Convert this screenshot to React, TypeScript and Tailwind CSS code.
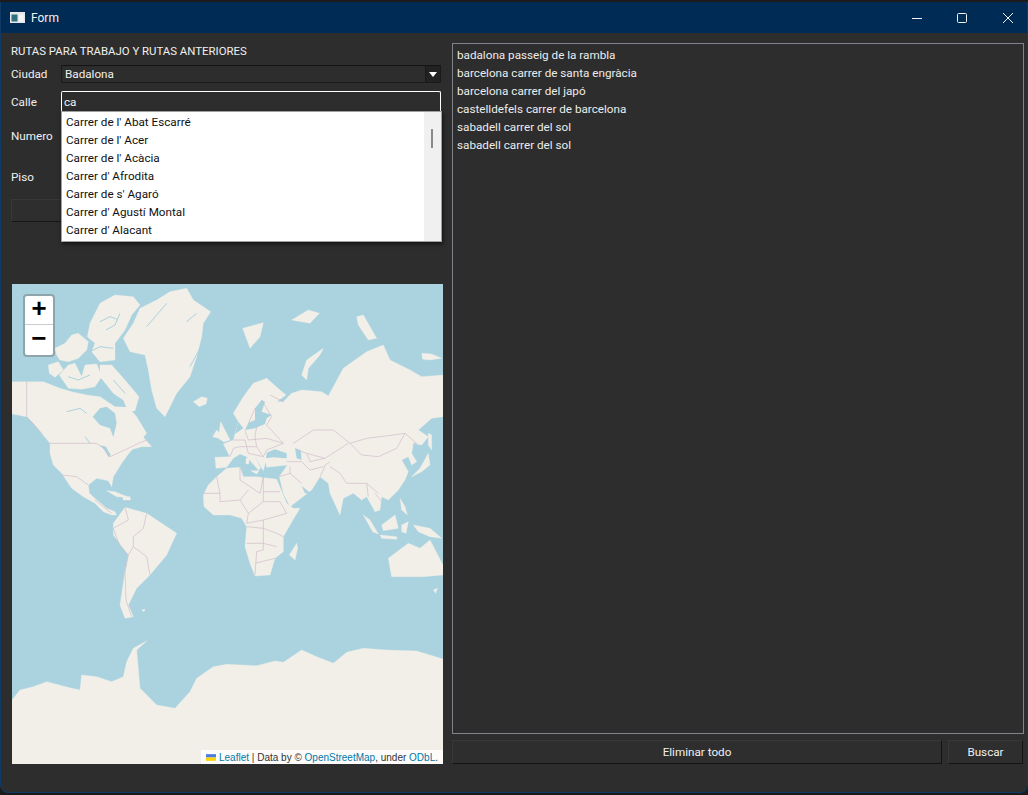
const LAND = [
  // north america
  "36,305 80,305 130,305 180,325 215,335 260,345 300,350 345,380 385,382 410,410 440,460 430,472 455,500 425,500 398,508 385,522 365,550 340,590 335,620 325,602 290,595 265,615 268,640 290,660 305,672 320,685 345,695 350,705 335,705 310,695 285,670 250,650 215,625 185,580 160,555 150,520 150,490 125,460 100,430 80,410 36,402",
  // greenland
  "370,175 400,130 420,85 470,60 510,35 560,25 580,60 632,95 610,130 605,170 590,230 570,290 530,340 510,380 495,410 470,385 455,330 445,270 435,225 390,215",
  // arctic islands
  "270,130 300,70 345,45 400,50 420,75 395,105 375,150 345,190 345,240 300,245 275,215 285,190 262,170",
  "300,255 335,255 375,300 417,350 405,392 385,395 370,360 340,340 300,290",
  "145,255 175,245 190,270 165,292 148,280",
  "178,285 205,255 225,250 245,290 255,255 290,252 305,290 285,320 245,328 205,325",
  "165,205 195,190 215,165 235,160 265,185 260,210 235,235 205,245 180,240 170,225",
  // iceland, britain, ireland
  "580,365 605,350 622,355 618,372 598,380",
  "655,475 662,425 672,445 690,480 672,486",
  "638,470 650,450 660,460 655,475",
  // eurasia
  "645,532 690,530 670,492 700,480 705,462 715,425 700,400 730,350 760,310 800,295 840,330 858,345 830,365 850,365 875,340 905,330 965,335 985,348 1000,320 1030,265 1100,215 1150,195 1170,240 1230,270 1265,290 1329,285 1329,410 1295,415 1255,450 1285,470 1265,495 1240,490 1235,520 1250,545 1235,555 1225,530 1205,540 1225,575 1215,600 1195,630 1165,660 1145,650 1140,690 1125,695 1100,650 1085,660 1060,640 1030,655 1020,705 990,640 985,610 960,590 935,630 870,680 850,640 838,590 862,555 800,562 797,545 790,572 765,530 782,565 775,570 740,530 720,522 700,535 680,562 648,565",
  // africa
  "610,645 625,615 650,590 680,565 720,562 730,590 770,590 830,598 860,670 880,685 900,685 870,735 850,770 850,815 825,835 810,885 765,888 750,850 735,800 740,740 725,715 690,705 640,705 612,680",
  "868,825 890,790 893,805 885,840",
  // south america
  "340,730 375,682 440,700 530,760 500,825 450,885 410,925 385,975 400,1010 375,1015 360,975 375,875 385,825 340,765",
  // australia
  "1165,835 1225,790 1260,805 1290,780 1329,855 1329,885 1270,890 1175,890",
  "1300,930 1312,925 1307,940",
  // antarctica
  "36,1260 60,1230 100,1220 140,1205 215,1225 240,1230 245,1185 290,1190 335,1205 370,1190 380,1145 400,1105 440,1083 410,1110 420,1225 470,1275 525,1285 570,1235 590,1195 640,1160 680,1153 770,1157 825,1143 850,1147 905,1110 950,1130 1000,1150 1040,1117 1090,1105 1160,1110 1250,1113 1329,1137 1329,1452 36,1452",
  // small islands
  "728,145 790,128 780,170 750,205",
  "905,285 920,240 970,205 960,225 925,265 920,300",
  "1070,110 1090,105 1130,175 1105,180 1075,135",
  "1265,220 1295,222 1325,235 1290,240 1268,238",
  "875,120 925,90 958,100 930,130",
  "320,632 345,635 385,652 350,650",
  "368,650 390,650 392,660 370,660",
  "1235,590 1260,565 1285,520 1290,555 1265,575",
  "1285,460 1295,465 1295,510 1285,495",
  "1200,655 1215,680 1222,705 1205,690",
  "1090,705 1110,720 1135,762 1118,755",
  "1145,735 1185,705 1195,745 1150,752",
  "1140,765 1190,770 1190,778 1145,775",
  "1205,735 1225,725 1218,760 1205,755",
  "1240,735 1290,745 1325,775 1290,770 1255,755",
  "738,535 748,535 746,552 738,552",
  "752,572 778,572 770,582",
  "425,990 435,988 432,995",
];

const WATER = [
  // hudson bay
  "278,410 300,385 320,380 345,400 350,430 340,472 330,445 300,435",
  // baltic
  "735,450 745,428 765,420 765,385 785,360 795,365 785,395 815,405 800,415 795,432 765,445",
  "705,462 730,445 715,425",
  // black sea, caspian, gulf
  "800,518 825,508 860,520 860,535 820,532 798,535",
  "885,505 902,510 905,540 890,535",
  "905,618 935,642 915,640",
  // great lakes
  "300,495 318,500 332,525 326,532 312,508",
];

// fjords and channels, drawn as thin water lines
const CHANNELS = [
  "300,125 330,110 352,118",
  "318,150 345,135 360,100",
  "270,215 300,200 340,205",
  "205,290 235,300 270,285",
  "440,140 470,105 500,70",
  "560,125 590,100",
  "570,260 600,205",
  "340,300 375,340",
  "200,395 240,385 260,400",
  "255,470 270,490",
];

const BORDERS = [
  "80,305 80,410 125,460",
  "150,490 290,490 310,505 330,530 385,505 415,490 440,480",
  "185,585 230,590 265,615",
  "285,660 310,680 335,700",
  // south america
  "375,682 385,720 340,745 360,800 385,825 400,800 440,830 450,885",
  "385,825 375,875 378,960 395,1010",
  "440,700 430,745 400,770 400,800",
  // europe
  "700,480 735,480 745,520 790,530 800,510 850,490 800,435",
  "735,452 745,480 800,475 850,490",
  "720,500 770,500 790,530",
  "770,500 765,470 770,440",
  "690,530 700,505 720,500",
  "765,385 745,430",
  "785,360 815,410 800,435",
  "850,365 810,345",
  // asia
  "880,490 940,450 1000,450 1050,490 1100,475 1180,465 1215,460 1250,490 1240,490",
  "1050,490 1085,525 1135,530 1190,505 1215,460",
  "890,510 920,520 975,535 1045,490",
  "860,545 905,545 930,570 970,560 990,545",
  "990,560 1020,580 1040,610 1100,610 1135,640",
  "960,590 975,560",
  "838,590 870,580 905,610",
  "870,580 870,560",
  "920,520 930,545 975,535",
  "1100,610 1105,650",
  "1125,640 1145,665",
  // africa
  "650,590 660,640 610,640",
  "720,562 720,600 780,640 790,590",
  "790,590 790,635 840,635",
  "660,640 660,665 720,660 745,630",
  "720,660 745,700 740,730 790,720 860,700",
  "745,700 790,665 790,635",
  "790,665 840,665 860,700",
  "740,740 790,745 830,760 850,770",
  "790,720 790,745 790,810 770,815 765,885",
  "740,790 790,790 830,800",
  "765,850 825,835",
];

function WorldMap() {
  return (
    <svg viewBox="36 12 1293 1440" className="block h-full w-full">
      <rect x="36" y="12" width="1293" height="1440" fill="#aad3df" />
      {LAND.map((pts) => (
        <polygon key={pts} points={pts} fill="#f2efe9" stroke="#f2efe9" strokeWidth="1" strokeLinejoin="round" />
      ))}
      {WATER.map((pts) => (
        <polygon key={pts} points={pts} fill="#aad3df" />
      ))}
      {CHANNELS.map((pts) => (
        <polyline key={pts} points={pts} fill="none" stroke="#aad3df" strokeWidth="3" />
      ))}
      {BORDERS.map((pts) => (
        <polyline key={pts} points={pts} fill="none" stroke="#cfb9c9" strokeWidth="2" />
      ))}
    </svg>
  );
}

function TitleBar() {
  return (
    <div className="flex h-[31px] shrink-0 items-center bg-[#002b54] text-[#f2f2f2]">
      <svg width="16" height="12" viewBox="0 0 16 12" className="ml-[9px] mr-[5px]">
        <rect width="15" height="11" fill="#e4e8ea" />
        <rect x="1.5" y="2.5" width="6" height="7" fill="#2f6f7f" />
        <rect x="9" y="2.5" width="4.5" height="7" fill="#f5f5f5" />
      </svg>
      <span className="text-[12px]">Form</span>
      <div className="ml-auto flex items-center">
        <svg width="12" height="12" viewBox="0 0 12 12" className="mr-[33px]">
          <path d="M1 6.5h10" stroke="#f2f2f2" strokeWidth="1" />
        </svg>
        <svg width="12" height="12" viewBox="0 0 12 12" className="mr-[34px]">
          <rect x="1.5" y="1.5" width="9" height="9" rx="1" fill="none" stroke="#f2f2f2" strokeWidth="1" />
        </svg>
        <svg width="12" height="12" viewBox="0 0 12 12" className="mr-[13px]">
          <path d="M1 1l10 10M11 1L1 11" stroke="#f2f2f2" strokeWidth="1" />
        </svg>
      </div>
    </div>
  );
}

function Field({ label, className, labelClass, children }: { label: string; className: string; labelClass: string; children?: React.ReactNode }) {
  return (
    <div className={"flex items-center " + className}>
      <span className={"w-[50px] shrink-0 " + labelClass}>{label}</span>
      {children}
    </div>
  );
}

const STREETS = [
  "Carrer de l' Abat Escarré",
  "Carrer de l' Acer",
  "Carrer de l' Acàcia",
  "Carrer d' Afrodita",
  "Carrer de s' Agaró",
  "Carrer d' Agustí Montal",
  "Carrer d' Alacant",
];

const ROUTES = [
  "badalona passeig de la rambla",
  "barcelona carrer de santa engràcia",
  "barcelona carrer del japó",
  "castelldefels carrer de barcelona",
  "sabadell carrer del sol",
  "sabadell carrer del sol",
];

function LeftColumn() {
  return (
    <div className="relative flex w-[432px] shrink-0 flex-col">
      <div className="h-[16px] text-[11.4px] leading-[16px]">RUTAS PARA TRABAJO Y RUTAS ANTERIORES</div>

      <Field label="Ciudad" labelClass="pt-[2px]" className="mt-[6px] h-[18px]">
        <div className="flex h-[18px] w-[380px] items-center border border-[#1a1a1a] border-t-[#141414] pl-[3px]">
          <span className="pt-[2px]">Badalona</span>
          <div className="ml-auto flex h-[16px] w-[15px] items-center justify-center border-l border-[#1a1a1a] bg-[#222]">
            <div className="h-0 w-0 border-x-[4px] border-t-[5px] border-x-transparent border-t-white" />
          </div>
        </div>
      </Field>

      <Field label="Calle" labelClass="pt-[4px]" className="mt-[8px] h-[20px]">
        <div className="flex h-[20px] w-[380px] items-center rounded-t-[2px] border border-b-0 border-white bg-[#2d2d2d] pl-[2px] pt-[2px]">ca</div>
      </Field>

      <Field label="Numero" labelClass="pt-[2px]" className="mt-[15px] h-[20px]" />
      <Field label="Piso" labelClass="pt-[4px]" className="mt-[20px] h-[20px]" />

      <div className="mt-[13px] h-[23px] w-[431px] border border-[#383838] border-b-[#161616] border-r-[#161616] bg-[#2e2e2e]" />

      <div className="relative ml-px mt-[62px] h-[480px] w-[431px] overflow-hidden">
        <WorldMap />
        <div className="absolute left-[11px] top-[10px] rounded-[4px] border-2 border-[#8fa5ad] bg-white text-black">
          <div className="flex h-[29px] w-[28px] items-center justify-center border-b border-[#ccc] font-['Liberation_Mono',monospace] text-[26px] font-bold leading-none">+</div>
          <div className="flex h-[30px] w-[28px] items-center justify-center font-['Liberation_Mono',monospace] text-[26px] font-bold leading-none">−</div>
        </div>
        <div className="absolute bottom-0 right-0 flex h-[14px] items-center whitespace-pre bg-[#fffc] pl-[5px] pr-[5px] font-['Liberation_Sans',sans-serif] text-[10px] text-[#333]">
          <svg width="10" height="7" viewBox="0 0 12 8" className="mr-[3px]">
            <rect width="12" height="4" fill="#4C7BE1" />
            <rect y="4" width="12" height="4" fill="#FFD500" />
          </svg>
          <span className="text-[#0078a8]">Leaflet</span> | Data by © <span className="text-[#0078a8]">OpenStreetMap</span>, under <span className="text-[#0078a8]">ODbL</span>.
        </div>
      </div>

      {/* completer popup, sits over the form rows */}
      <div className="absolute left-[50px] top-[68px] flex h-[131px] w-[381px] border border-[#a0a0a0] bg-white text-[#111] shadow-[1px_2px_4px_rgba(0,0,0,0.6)]">
        <div className="flex-1 pl-[4px] pt-[1px]">
          {STREETS.map((s) => (
            <div key={s} className="h-[18px] leading-[18px]">{s}</div>
          ))}
        </div>
        <div className="w-[17px] bg-[#f0f0f0] pl-[7px] pt-[17px]">
          <div className="h-[19px] w-[2px] bg-[#8a8a8a]" />
        </div>
      </div>
    </div>
  );
}

function RightColumn() {
  return (
    <div className="flex min-w-0 flex-1 flex-col">
      <div className="h-[691px] border border-[#80848a] px-[4px] pt-[2px]">
        {ROUTES.map((r, i) => (
          <div key={i} className="h-[18px] leading-[18px] text-[#ececec]">{r}</div>
        ))}
      </div>
      <div className="mr-px mt-[6px] flex h-[24px] gap-[6px]">
        <button className="flex-1 border border-[#383838] border-b-[#141414] border-r-[#141414] bg-[#2e2e2e] pt-[2px]">Eliminar todo</button>
        <button className="w-[75px] border border-[#383838] border-b-[#141414] border-r-[#141414] bg-[#2e2e2e] pt-[2px]">Buscar</button>
      </div>
    </div>
  );
}

export default function App() {
  return (
    <div className="h-[795px] w-[1028px] overflow-hidden bg-[#1b1b1b] pt-[2px] font-['Roboto',sans-serif] text-[11.7px] text-[#f0f0f0]">
      <div className="flex h-[791px] flex-col overflow-hidden rounded-b-[8px] border-x border-b border-[#0f3a63] bg-[#2d2d2d]">
        <TitleBar />
        <div className="flex gap-[9px] pl-[10px] pr-[3px] pt-[10px]">
          <LeftColumn />
          <RightColumn />
        </div>
      </div>
    </div>
  );
}
